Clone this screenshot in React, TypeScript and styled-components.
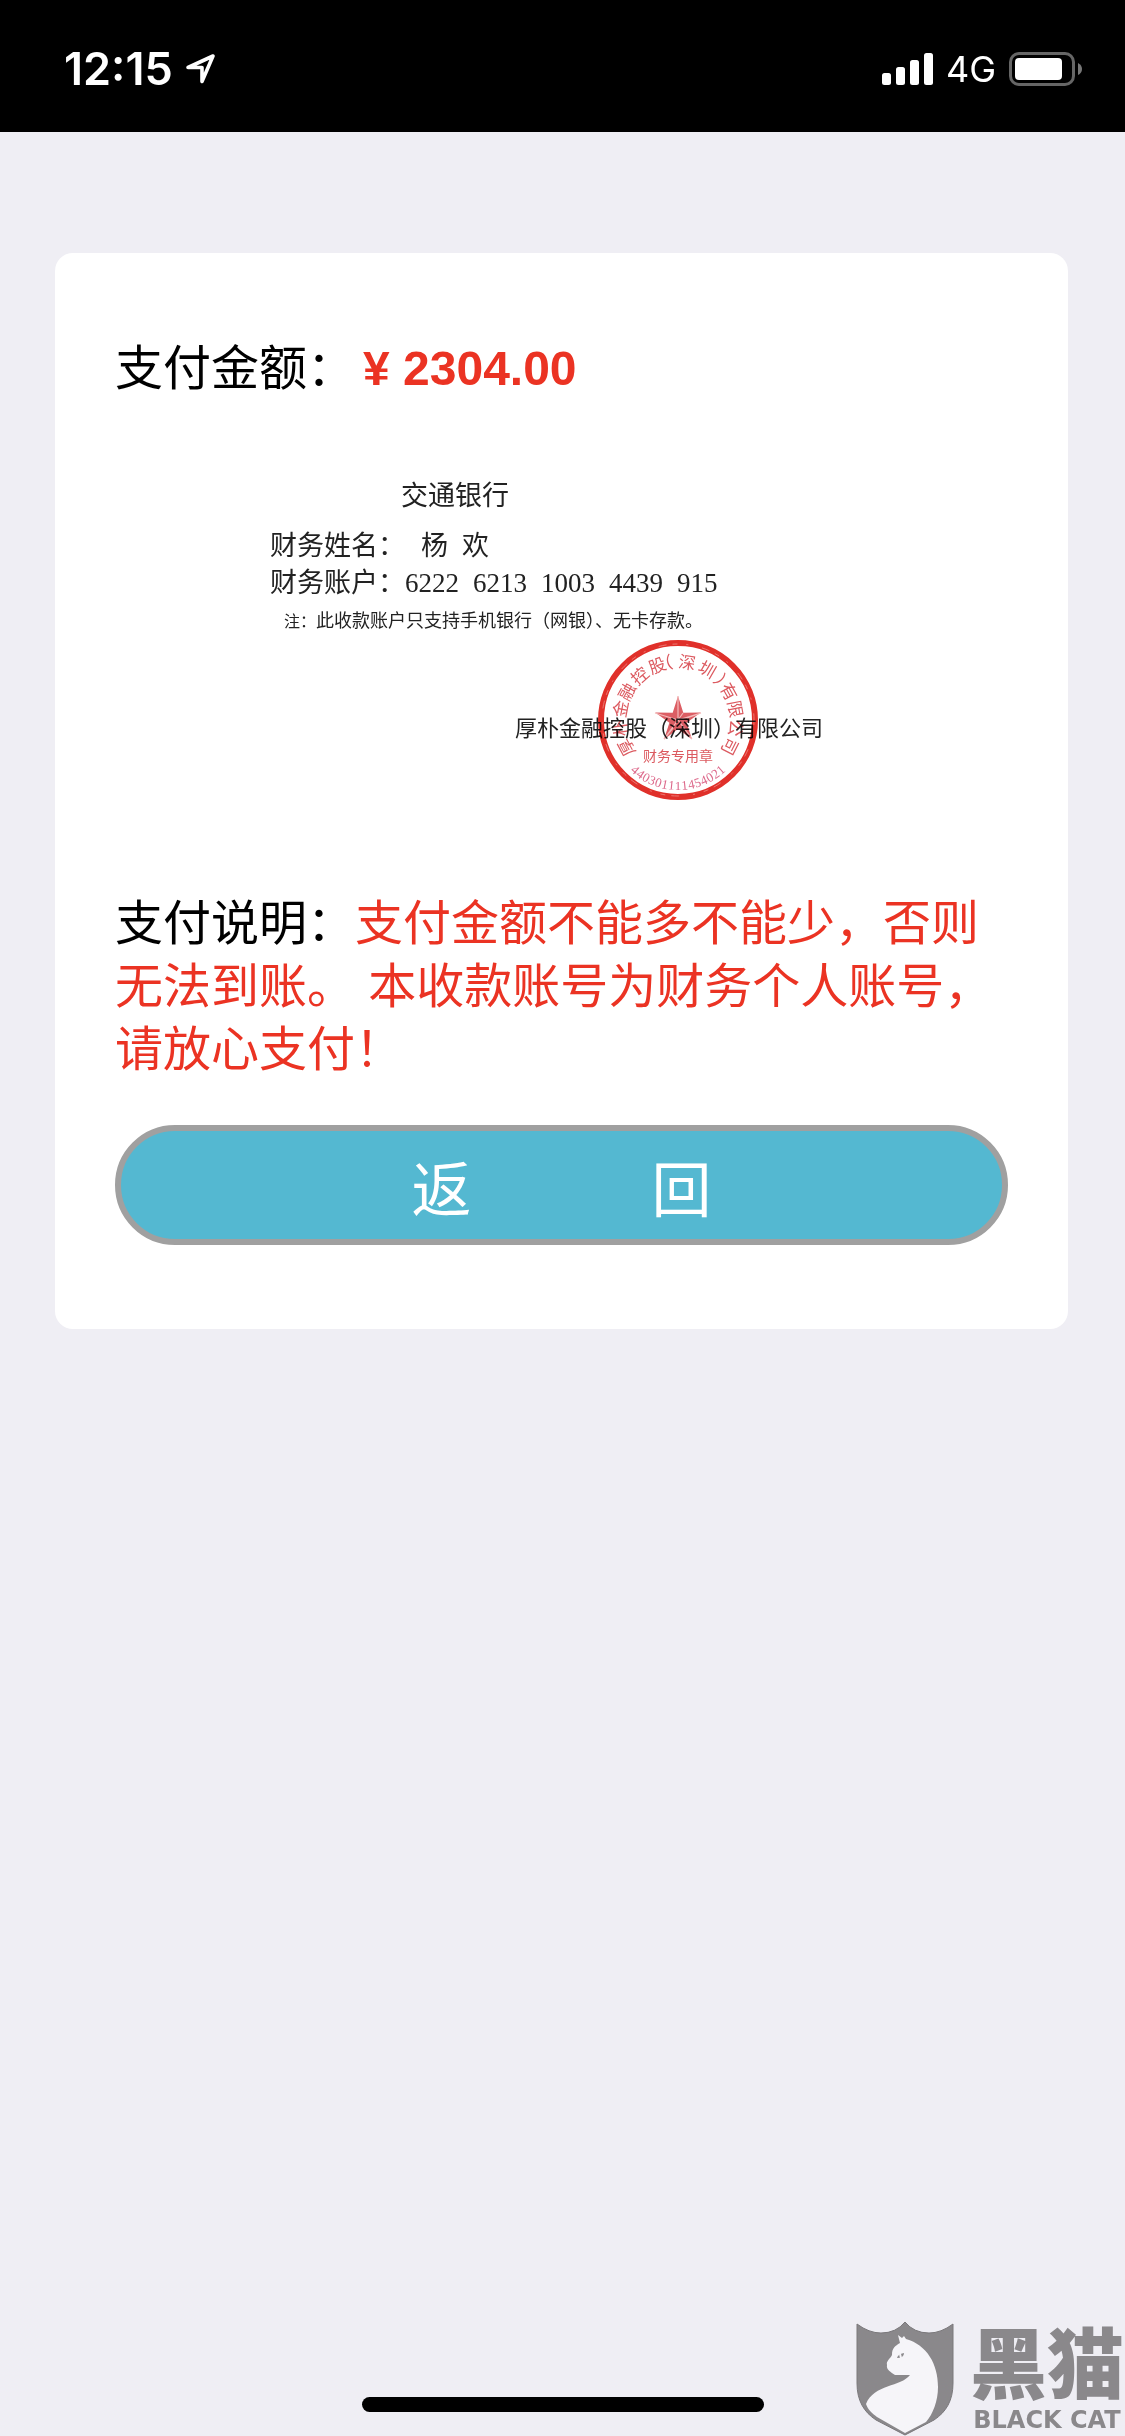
import React from "react";
import styled, { createGlobalStyle } from "styled-components";

const sans = `"Liberation Sans", "Noto Sans CJK SC", sans-serif`;
const serif = `"Liberation Serif", "Noto Sans CJK SC", serif`;

const GlobalStyle = createGlobalStyle`
  *, *::before, *::after { box-sizing: border-box; }
  body { margin: 0; background: #efeef4; }
`;

const Page = styled.div`
  display: flex;
  flex-direction: column;
  min-height: 100vh;
  background: #efeef4;
  color: #000;
  font-family: ${sans};
`;

const StatusBar = styled.header`
  display: flex;
  align-items: center;
  justify-content: space-between;
  height: 132px;
  padding: 6px 43px 0 64px;
  background: #000;
  color: #fff;
  font-family: Inter, sans-serif;
`;

const StatusGroup = styled.div<{ $gap: number }>`
  display: flex;
  align-items: center;
  gap: ${(p) => p.$gap}px;
`;

const Clock = styled.time`
  font-size: 45px;
  line-height: 54px;
  font-weight: 600;
`;

const Network = styled.span`
  font-size: 36px;
  line-height: 44px;
`;

const Icon = styled.svg`
  display: block;
  flex: none;
`;

const Main = styled.main`
  flex: 1;
  padding: 121px 57px 0 55px;
`;

const Card = styled.section`
  padding: 84px 60px 84px;
  border-radius: 18px;
  background: #fff;
`;

const AmountRow = styled.p`
  display: flex;
  align-items: center;
  gap: 8px;
  margin: 0;
  font-size: 48px;
  line-height: 63px;
`;

const Amount = styled.strong`
  color: #eb3323;
  font-weight: 700;
`;

const Receipt = styled.section`
  display: flex;
  flex-direction: column;
  align-items: flex-start;
  margin: 78px 0 147px;
  padding-left: 155px;
  color: #222;
  font-family: ${serif};
`;

const BankName = styled.h2`
  margin: 0 0 13px;
  padding-left: 131px;
  font-size: 27px;
  line-height: 37px;
  font-weight: 400;
`;

const ReceiptLine = styled.p`
  display: flex;
  gap: 14px;
  margin: 0;
  font-size: 27px;
  line-height: 37px;
`;

const HolderName = styled.span`
  display: flex;
  gap: 14px;
  padding-left: 2px;
`;

const ReceiptNote = styled.p`
  margin: 3px 0 0;
  padding-left: 14px;
  font-size: 18px;
  line-height: 32px;
`;

const NoteLabel = styled.span`
  font-size: 16px;
`;

const Company = styled.p`
  position: relative;
  margin: 75px 0 0;
  padding-left: 245px;
  font-size: 22px;
  line-height: 32px;
  white-space: nowrap;
`;

const SealBox = styled.div`
  position: absolute;
  left: 327px;
  top: -74px;
  width: 162px;
  height: 162px;
  mix-blend-mode: multiply;
`;

const Notice = styled.p`
  margin: 0 0 44px;
  font-size: 48px;
  line-height: 63px;
`;

const NoticeText = styled.span`
  color: #eb3323;
`;

const BackButton = styled.button`
  display: flex;
  align-items: center;
  justify-content: center;
  gap: 180px;
  width: 100%;
  height: 120px;
  padding: 14px 0 0;
  border: 6px solid #a0a0a0;
  border-radius: 60px;
  background: #54b8d1;
  color: #fff;
  font-family: ${sans};
  font-size: 60px;
  line-height: 80px;
  font-weight: 400;
`;

const Footer = styled.footer`
  position: relative;
  display: flex;
  justify-content: center;
  padding: 0 0 24px;
`;

const HomeIndicator = styled.div`
  width: 402px;
  height: 15px;
  border-radius: 8px;
  background: #000;
`;

const Watermark = styled.div`
  position: absolute;
  right: 1px;
  bottom: 0;
  display: flex;
  align-items: flex-end;
  gap: 16px;
  color: #8a888b;
`;

const Wordmark = styled.div`
  display: flex;
  flex-direction: column;
  align-items: center;
  gap: 6px;
  width: 154px;
  white-space: nowrap;
`;

const WordmarkName = styled.span`
  font-family: "Noto Sans CJK SC", sans-serif;
  font-size: 77px;
  line-height: 77px;
  font-weight: 900;
`;

const WordmarkLatin = styled.span`
  font-family: "DejaVu Sans", sans-serif;
  font-size: 24px;
  line-height: 32px;
  font-weight: 700;
`;

const ringGlyphs: [string, number][] = [
  ["厚", -118], ["朴", -98], ["金", -79], ["融", -61], ["控", -41],
  ["股", -21], ["（", -14], ["深", 9], ["圳", 30], ["）", 51],
  ["有", 61], ["限", 79], ["公", 98], ["司", 117],
];
const serial = "440301111454021";

function Seal() {
  const star = Array.from({ length: 10 }, (_, i) => {
    const r = i % 2 ? 9 : 24;
    const a = (i * Math.PI) / 5;
    return `${(r * Math.sin(a)).toFixed(1)},${(-r * Math.cos(a)).toFixed(1)}`;
  }).join(" ");
  return (
    <Icon
      viewBox="-81 -81 162 162"
      width="162"
      height="162"
      role="img"
      aria-label="财务专用章"
      fontFamily={serif}
      textAnchor="middle"
      fill="#dc5a60"
    >
      <circle r="77" fill="none" stroke="#e0302a" strokeWidth="6" />
      <circle r="76" fill="none" stroke="#ee8a84" strokeWidth="0.8" strokeDasharray="5 9 2 14 8 6" />
      {ringGlyphs.map(([ch, angle]) => (
        <text key={angle} fontSize="17" y="-52" transform={`rotate(${angle})`}>
          {ch}
        </text>
      ))}
      <polygon points={star} fill="#dc5e64" />
      <path d="M0 -24V0L5 -7M0 0L23 -7L9 -2M0 0L14 19L6 8M0 0L-14 19L-5 8M0 0L-23 -7" fill="none" stroke="#f3b9b9" strokeWidth="1.2" />
      <text fontSize="14" y="41">财务专用章</text>
      {serial.split("").map((d, i) => (
        <text key={i} fontSize="13" y="70" fill="#dd6a8c" transform={`rotate(${(7 - i) * 5.8})`}>
          {d}
        </text>
      ))}
    </Icon>
  );
}

function LocationArrow() {
  return (
    <Icon width="32" height="32" viewBox="0 0 32 32" aria-hidden="true">
      <path d="M3 14.5L28 3L17 28.500V14.500Z" fill="none" stroke="#fff" strokeWidth="3.600" strokeLinejoin="round" />
    </Icon>
  );
}

function Signal() {
  return (
    <Icon width="51" height="32" viewBox="0 0 51 32" fill="#fff" aria-hidden="true">
      <rect x="0" y="20" width="9" height="12" rx="2.500" />
      <rect x="14" y="14" width="9" height="18" rx="2.500" />
      <rect x="28" y="7" width="9" height="25" rx="2.500" />
      <rect x="42" y="0" width="9" height="32" rx="2.500" />
    </Icon>
  );
}

function Battery() {
  return (
    <Icon width="73" height="34" viewBox="0 0 73 34" aria-hidden="true">
      <rect x="1.500" y="1.500" width="63" height="31" rx="8.500" fill="none" stroke="#666" strokeWidth="3" />
      <rect x="6" y="6" width="47" height="22" rx="4" fill="#fff" />
      <path d="M69 11Q73 13 73 17Q73 21 69 23Z" fill="#777" />
    </Icon>
  );
}

function CatShield() {
  return (
    <Icon width="98" height="115" viewBox="0 0 98 115" aria-hidden="true">
      <path
        d="M1 3Q13 12 25 12Q40 12 49 1Q58 12 73 12Q85 12 97 3V62C97 80 90 91 78 99L49 114L20 99C8 91 1 80 1 62Z"
        fill="#8a888b"
        stroke="#7a787b"
        strokeWidth="1"
      />
      <path
        d="M42 14L46 17L48 15L50 18C71 24 82 43 82 66C82 80 77 93 70 101L49 112L21 96C16 92 12 89 10 83C18 63 45 66 54 54H39C35 51 30 49 31 44C30 40 34 38 36 34C36 27 39 25 44 22Z"
        fill="#f6f5f9"
      />
      <path d="M41 37Q42 33 48 32Q48 37 41 37Z" fill="#8a888b" />
      <path d="M44 33L45 37" stroke="#f6f5f9" strokeWidth="2" />
    </Icon>
  );
}

export default function App() {
  return (
    <Page>
      <GlobalStyle />
      <StatusBar>
        <StatusGroup $gap={12}>
          <Clock>12:15</Clock>
          <LocationArrow />
        </StatusGroup>
        <StatusGroup $gap={13}>
          <Signal />
          <Network>4G</Network>
          <Battery />
        </StatusGroup>
      </StatusBar>
      <Main>
        <Card>
          <AmountRow>
            <span>支付金额：</span>
            <Amount>¥ 2304.00</Amount>
          </AmountRow>
          <Receipt>
            <BankName>交通银行</BankName>
            <ReceiptLine>
              <span>财务姓名：</span>
              <HolderName>
                <span>杨</span>
                <span>欢</span>
              </HolderName>
            </ReceiptLine>
            <ReceiptLine>
              <span>财务账户：6222</span>
              <span>6213</span>
              <span>1003</span>
              <span>4439</span>
              <span>915</span>
            </ReceiptLine>
            <ReceiptNote>
              <NoteLabel>注：</NoteLabel>此收款账户只支持手机银行（网银）、无卡存款。
            </ReceiptNote>
            <Company>
              厚朴金融控股（深圳）有限公司
              <SealBox>
                <Seal />
              </SealBox>
            </Company>
          </Receipt>
          <Notice>
            支付说明：
            <NoticeText>支付金额不能多不能少，否则无法到账。 本收款账号为财务个人账号，请放心支付！</NoticeText>
          </Notice>
          <BackButton type="button">
            <span>返</span>
            <span>回</span>
          </BackButton>
        </Card>
      </Main>
      <Footer>
        <HomeIndicator />
        <Watermark>
          <CatShield />
          <Wordmark>
            <WordmarkName>黑猫</WordmarkName>
            <WordmarkLatin>BLACK CAT</WordmarkLatin>
          </Wordmark>
        </Watermark>
      </Footer>
    </Page>
  );
}
